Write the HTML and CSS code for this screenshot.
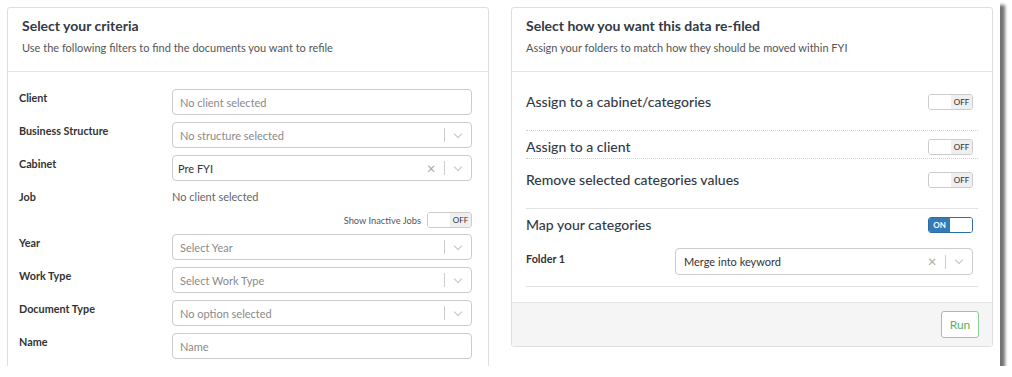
FILE: index.html
```html
<!DOCTYPE html>
<html lang="en">

<head>
    <meta charset="UTF-8">
    <title>Refile documents</title>
    <link rel="stylesheet" href="styles.css">
</head>

<body>
    <div class="shot">
        <!-- Criteria panel -->
        <div class="panel panel-left">
            <div class="panel-head">
                <h2>Select your criteria</h2>
                <p>Use the following filters to find the documents you want to refile</p>
            </div>
            <div class="panel-body form">
                <div class="row">
                    <label>Client</label>
                    <div class="input"><span class="placeholder">No client selected</span></div>
                </div>
                <div class="row">
                    <label>Business Structure</label>
                    <div class="input select">
                        <span class="placeholder">No structure selected</span>
                        <span class="sep"></span><span class="chev"></span>
                    </div>
                </div>
                <div class="row">
                    <label>Cabinet</label>
                    <div class="input select tight">
                        <span class="value">Pre FYI</span>
                        <span class="clear">&times;</span>
                        <span class="sep"></span><span class="chev"></span>
                    </div>
                </div>
                <div class="row row-job">
                    <label>Job</label>
                    <div class="static">No client selected</div>
                </div>
                <div class="row-inactive">
                    <span>Show Inactive Jobs</span>
                    <span class="toggle"><span class="knob"></span><span class="off">OFF</span></span>
                </div>
                <div class="row">
                    <label>Year</label>
                    <div class="input select">
                        <span class="placeholder">Select Year</span>
                        <span class="sep"></span><span class="chev"></span>
                    </div>
                </div>
                <div class="row">
                    <label>Work Type</label>
                    <div class="input select">
                        <span class="placeholder">Select Work Type</span>
                        <span class="sep"></span><span class="chev"></span>
                    </div>
                </div>
                <div class="row">
                    <label>Document Type</label>
                    <div class="input select">
                        <span class="placeholder">No option selected</span>
                        <span class="sep"></span><span class="chev"></span>
                    </div>
                </div>
                <div class="row">
                    <label>Name</label>
                    <div class="input"><span class="placeholder">Name</span></div>
                </div>
            </div>
        </div>

        <!-- Refile panel -->
        <div class="panel panel-right">
            <div class="panel-head">
                <h2>Select how you want this data re-filed</h2>
                <p>Assign your folders to match how they should be moved within FYI</p>
            </div>
            <div class="panel-body options">
                <div class="opt opt-cabinet">
                    <span>Assign to a cabinet/categories</span>
                    <span class="toggle"><span class="knob"></span><span class="off">OFF</span></span>
                </div>
                <div class="opt opt-client">
                    <span>Assign to a client</span>
                    <span class="toggle"><span class="knob"></span><span class="off">OFF</span></span>
                </div>
                <div class="opt opt-remove">
                    <span>Remove selected categories values</span>
                    <span class="toggle"><span class="knob"></span><span class="off">OFF</span></span>
                </div>
                <div class="map">
                    <div class="opt opt-map">
                        <span>Map your categories</span>
                        <span class="toggle toggle-on"><span class="on">ON</span><span class="knob"></span></span>
                    </div>
                    <div class="folder">
                        <label>Folder 1</label>
                        <div class="input select">
                            <span class="value">Merge into keyword</span>
                            <span class="clear">&times;</span>
                            <span class="sep"></span><span class="chev"></span>
                        </div>
                    </div>
                </div>
            </div>
            <div class="panel-foot">
                <button class="btn-run">Run</button>
            </div>
        </div>
    </div>
</body>

</html>
```

FILE: styles.css
```css
/* Basic reset */
* {
    margin: 0;
    padding: 0;
    box-sizing: border-box;
}

body {
    font-family: 'Lato', 'Open Sans', sans-serif;
    background-color: #fff;
    color: #333;
}

/* The captured window with its drop shadow */
.shot {
    width: 1000px;
    height: 366px;
    background-color: #fff;
    box-shadow: 5px 5px 3px rgba(0, 0, 0, 0.55);
    padding: 7px 7px 0 7px;
    display: flex;
    gap: 22px;
    overflow: hidden;
}

/* Panels */
.panel {
    width: 482px;
    border: 1px solid #dedede;
    border-radius: 3px;
    background-color: #fff;
    display: flex;
    flex-direction: column;
}

.panel-left {
    height: 380px;
}

.panel-right {
    height: 340px;
}

.panel-head {
    height: 64px;
    padding: 9px 14px 0;
    border-bottom: 1px solid #e3e3e3;
}

.panel-head h2 {
    font-size: 14px;
    font-weight: 700;
    color: #333a45;
    line-height: 18px;
}

.panel-head p {
    font-size: 11px;
    color: #555;
    margin-top: 6px;
    line-height: 14px;
}

/* Left form */
.form {
    padding: 17px 16px 0 11px;
}

.row {
    display: flex;
    margin-bottom: 7px;
}

.row label {
    width: 153px;
    flex-shrink: 0;
    font-size: 10.8px;
    font-weight: 700;
    color: #333;
    padding-top: 2px;
}

.input {
    flex: 1;
    height: 26px;
    border: 1px solid #ccc;
    border-radius: 4px;
    display: flex;
    align-items: center;
    padding-left: 7px;
    font-size: 11px;
}

.input.tight {
    padding-left: 5px;
}

.placeholder {
    color: #8a8a8a;
    flex: 1;
}

.value {
    color: #333;
    flex: 1;
}

.select .sep {
    width: 1px;
    height: 14px;
    background-color: #ccc;
}

.select .clear {
    width: 26px;
    text-align: center;
    color: #aaa;
    font-size: 15px;
    line-height: 1;
}

.select .chev {
    width: 26px;
    height: 100%;
    position: relative;
}

.select .chev::after {
    content: "";
    position: absolute;
    left: 10px;
    top: 8px;
    width: 5px;
    height: 5px;
    border-right: 1px solid #c4c4c4;
    border-bottom: 1px solid #c4c4c4;
    transform: rotate(45deg);
}

.row-job {
    margin-bottom: 4px;
    height: 20px;
}

.static {
    font-size: 11px;
    color: #666;
    padding-top: 2px;
}

.row-inactive {
    display: flex;
    justify-content: flex-end;
    align-items: center;
    gap: 6px;
    font-size: 9.3px;
    color: #555;
    margin-bottom: 6px;
}

/* Toggles */
.toggle {
    display: inline-flex;
    width: 45px;
    height: 16px;
    border: 1px solid #ccc;
    border-radius: 3px;
    overflow: hidden;
    flex-shrink: 0;
}

.toggle .knob {
    width: 22px;
    background-color: #fff;
}

.toggle .off,
.toggle .on {
    flex: 1;
    font-size: 8px;
    line-height: 14px;
    text-align: center;
}

.toggle .off {
    background-color: #efefef;
    color: #333;
}

.toggle-on {
    border-color: #2e6da4;
}

.toggle-on .on {
    background-color: #337ab7;
    color: #fff;
    font-weight: 700;
}

/* Right options */
.options {
    flex: 1;
    padding: 0 14px 0 14px;
}

.opt {
    display: flex;
    justify-content: space-between;
    align-items: center;
    font-size: 14px;
    font-weight: 500;
    color: #333a45;
}

.opt .toggle {
    margin-right: 5px;
}

.opt-cabinet {
    padding: 21px 0 20px;
    border-bottom: 1px dotted #cfcfcf;
}

.opt-client {
    padding: 7px 0 3px;
    border-bottom: 1px dotted #cfcfcf;
}

.opt-remove {
    padding: 12px 0 20px;
    border-bottom: 1px solid #e3e3e3;
}

.map {
    padding: 7px 0 11px;
    border-bottom: 1px solid #e3e3e3;
}

.folder {
    display: flex;
    margin-top: 15px;
}

.folder label {
    width: 149px;
    flex-shrink: 0;
    font-size: 10.8px;
    font-weight: 700;
    padding-top: 4px;
}

.folder .input {
    height: 27px;
    margin-right: 5px;
    padding-left: 8px;
}

.panel-foot {
    height: 44px;
    background-color: #f5f5f5;
    border-top: 1px solid #e3e3e3;
    display: flex;
    justify-content: flex-end;
    align-items: center;
    padding: 0 13px;
}

.btn-run {
    width: 38px;
    height: 27px;
    border: 1px solid #8fcc96;
    border-radius: 3px;
    background-color: #fff;
    color: #5cae66;
    font-family: inherit;
    font-size: 12px;
}
```
